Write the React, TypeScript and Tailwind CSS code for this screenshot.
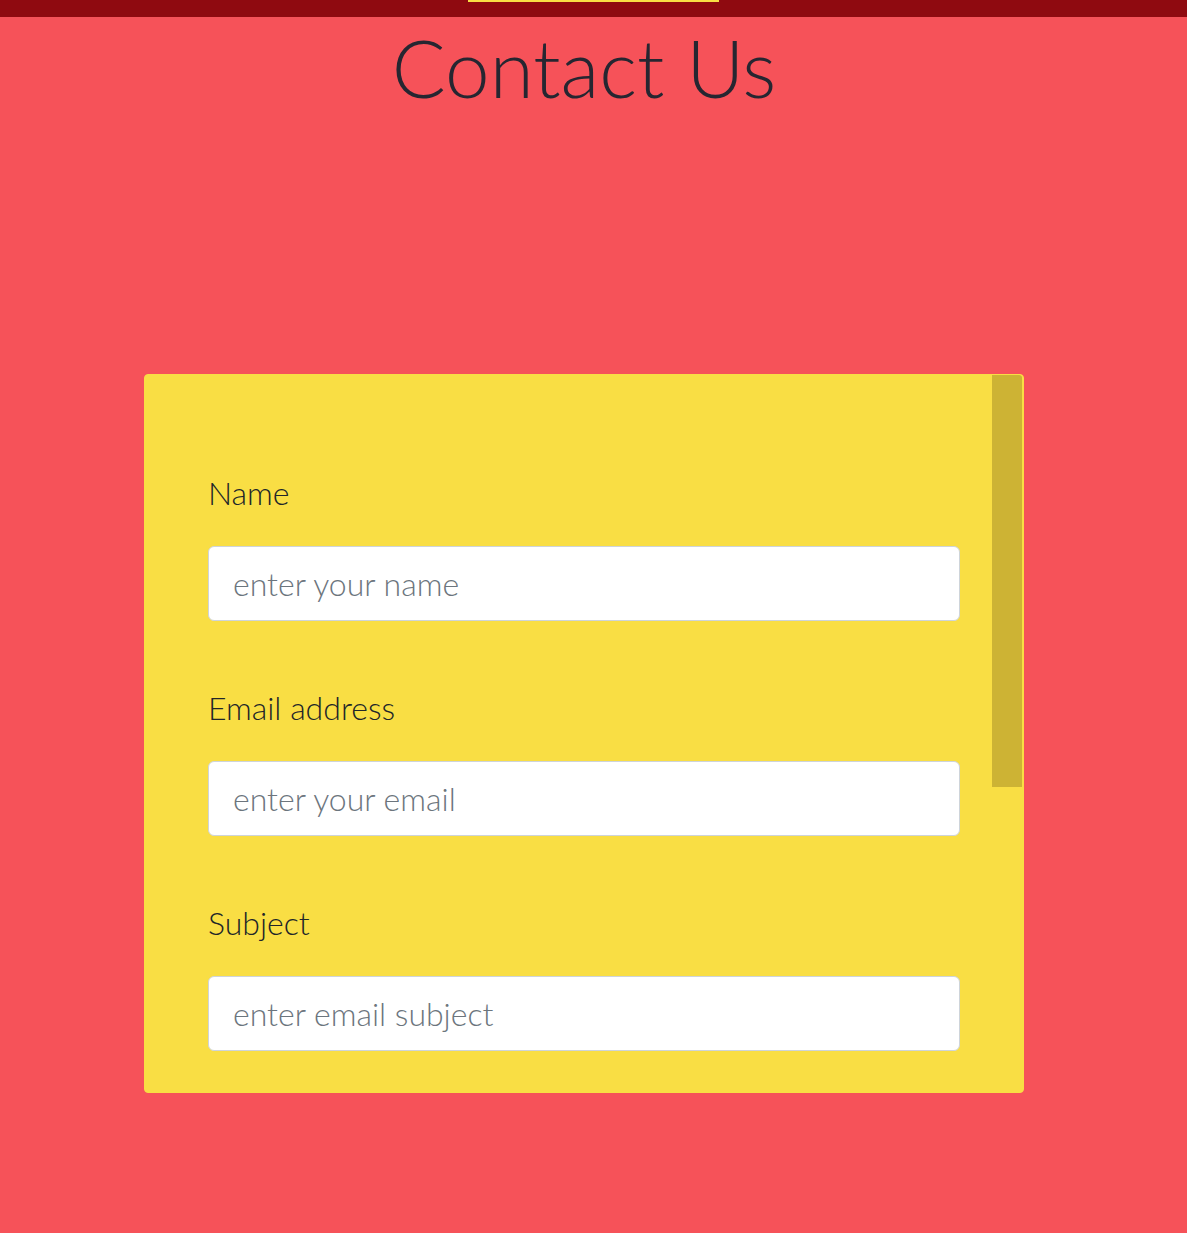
const fields = [
  { id: "name", label: "Name", placeholder: "enter your name", type: "text" },
  { id: "email", label: "Email address", placeholder: "enter your email", type: "email" },
  { id: "subject", label: "Subject", placeholder: "enter email subject", type: "text" },
];

export default function App() {
  return (
    <div
      className="min-h-[1233px] bg-[#f65259] text-[#212529]"
      style={{ fontFamily: "Lato, 'Open Sans', sans-serif" }}
    >
      {/* top nav strip */}
      <div className="flex h-[17px] justify-center bg-[#8f0a10]">
        <div className="h-[2px] w-[251px] bg-[#f9de44]" />
      </div>

      <div className="pr-[19px]">
        <h1 className="mt-[2px] text-center text-[80px] font-light leading-[1.2] text-[#262631]">
          Contact Us
        </h1>

        <div className="mt-[259px] flex justify-center">
          <div className="relative h-[719px] w-[880px] overflow-hidden rounded-[4px] border border-[#f9de44] bg-[#f9de44]">
            {/* scroll thumb */}
            <div className="absolute right-[1px] top-0 h-[412px] w-[30px] rounded-tr-[3px] bg-[#cdb334]" />
            <form className="flex flex-col gap-[64px] pl-[63px] pr-[63px] pt-[95px]">
              {fields.map((f) => (
                <div key={f.id} className="flex flex-col gap-[31px]">
                  <label htmlFor={f.id} className="text-[32px] font-light leading-[45px] text-[#212529]">
                    {f.label}
                  </label>
                  <input
                    id={f.id}
                    type={f.type}
                    placeholder={f.placeholder}
                    className="h-[75px] w-full rounded-[6px] border border-[#ced4da] bg-white px-[24px] text-[32px] font-light text-[#495057] outline-none placeholder:text-[#6c757d]"
                  />
                </div>
              ))}
            </form>
          </div>
        </div>
      </div>
    </div>
  );
}
